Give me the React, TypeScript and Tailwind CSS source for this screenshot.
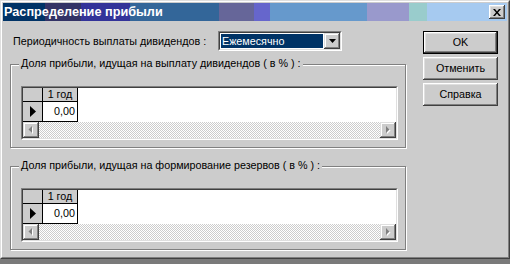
const raised =
  "shadow-[inset_-1px_-1px_0_#404040,inset_1px_1px_0_#ffffff,inset_-2px_-2px_0_#808080,inset_2px_2px_0_#dfdfdf]";
const scrollRaised =
  "shadow-[inset_-1px_-1px_0_#404040,inset_1px_1px_0_#dfdfdf,inset_-2px_-2px_0_#808080,inset_2px_2px_0_#ffffff]";

function ScrollButton({ dir }: { dir: "left" | "right" }) {
  return (
    <div className={`flex h-[16px] w-[16px] items-center justify-center bg-[#cccccc] ${scrollRaised}`}>
      <svg width="6" height="8" viewBox="0 0 6 8">
        {dir === "left" ? (
          <>
            <polygon points="5,1 5,8 1.5,4.5" fill="#ffffff" />
            <polygon points="4,0 4,7 0.5,3.5" fill="#808080" />
          </>
        ) : (
          <>
            <polygon points="2,1 2,8 5.5,4.5" fill="#ffffff" />
            <polygon points="1,0 1,7 4.5,3.5" fill="#808080" />
          </>
        )}
      </svg>
    </div>
  );
}

function Grid() {
  return (
    <div className="w-[377px] border border-t-[#808080] border-l-[#808080] border-r-white border-b-white">
      <div className="flex h-[52px] flex-col border border-t-[#404040] border-l-[#404040] border-r-[#dfdfdf] border-b-[#dfdfdf] bg-white">
        <div className="flex-1">
          <div className="flex h-[14px]">
            <div className="w-[20px] border-r border-b border-black bg-[#cccccc]" />
            <div className="w-[35px] border-r border-b border-black bg-[#cccccc] text-center leading-[13px]">
              1 год
            </div>
          </div>
          <div className="flex h-[20px]">
            <div className="flex w-[20px] items-center justify-center border-r border-b border-black bg-[#cccccc]">
              <svg width="6" height="11" viewBox="0 0 6 11">
                <polygon points="0,0 6,5.5 0,11" fill="#000000" />
              </svg>
            </div>
            <div className="w-[35px] border-r border-b border-black pr-[2px] text-right leading-[19px]">0,00</div>
          </div>
        </div>
        <div className="flex h-[16px]">
          <ScrollButton dir="left" />
          <div className="flex-1 bg-[image:repeating-conic-gradient(#cccccc_0_25%,#ffffff_0_50%)] bg-[length:2px_2px]" />
          <ScrollButton dir="right" />
        </div>
      </div>
    </div>
  );
}

function GroupBox({ title, className }: { title: string; className: string }) {
  return (
    <div
      className={`relative h-[84px] border border-[#808080] pt-[21px] pl-[10px] shadow-[inset_1px_1px_0_#ffffff,1px_1px_0_#ffffff] ${className}`}
    >
      <span className="absolute top-[-8px] left-[8px] bg-[#cccccc] px-[2px] leading-[13px]">{title}</span>
      <Grid />
    </div>
  );
}

function Button({ label, primary, className }: { label: string; primary?: boolean; className?: string }) {
  return (
    <div
      className={`flex h-[23px] w-[75px] items-center justify-center bg-[#cccccc] ${raised} ${
        primary ? "border border-black" : ""
      } ${className ?? ""}`}
    >
      {label}
    </div>
  );
}

export default function App() {
  return (
    <div className="flex h-[264px] w-[510px] flex-col bg-[#cccccc] font-['Liberation_Sans',Arial,sans-serif] text-[10.75px] text-black">
      <div className="flex h-[259px] flex-col border border-t-[#dfdfdf] border-l-[#dfdfdf] border-r-[#404040] border-b-[#404040]">
        <div className="flex flex-1 flex-col border border-t-white border-l-white border-r-[#808080] border-b-[#808080] p-[1px]">
          {/* title bar */}
          <div className="flex h-[18px] items-center bg-[linear-gradient(90deg,#003366_0_42px,#333366_42px_78px,#333399_78px_127px,#336699_127px_216px,#666699_216px_251px,#6666cc_251px_267px,#6699cc_267px_364px,#9999cc_364px_406px,#99cccc_406px_424px,#a6caf0_424px)] pl-[1px]">
            <span className="flex-1 text-[12.7px] leading-[18px] font-bold text-white">Распределение прибыли</span>
            <div className={`mr-[2px] flex h-[14px] w-[16px] items-center justify-center bg-[#cccccc] ${raised}`}>
              <svg width="8" height="7" viewBox="0 0 8 7">
                <path d="M0 0h2l2 2.5L6 0h2L5 3.5 8 7H6L4 4.5 2 7H0l3-3.5z" fill="#000000" />
              </svg>
            </div>
          </div>

          {/* body */}
          <div className="flex pt-[10px]">
            <div className="ml-[7px] w-[396px]">
              <div className="flex h-[20px] items-center">
                <span className="w-[208px] pl-[3px]">Периодичность выплаты дивидендов :</span>
                <div className="flex h-[20px] w-[124px] border border-t-[#808080] border-l-[#808080] border-r-white border-b-white">
                  <div className="flex flex-1 border border-t-[#404040] border-l-[#404040] border-r-[#dfdfdf] border-b-[#dfdfdf] bg-white">
                    <div className="flex-1 p-[1px]">
                      <div className="h-full bg-[#003366] pl-[1px] leading-[14px] text-white">Ежемесячно</div>
                    </div>
                    <div className={`flex h-[16px] w-[16px] items-center justify-center bg-[#cccccc] ${scrollRaised}`}>
                      <svg width="7" height="4" viewBox="0 0 7 4">
                        <polygon points="0,0 7,0 3.5,4" fill="#000000" />
                      </svg>
                    </div>
                  </div>
                </div>
              </div>

              <GroupBox className="mt-[13px]" title="Доля прибыли, идущая на выплату дивидендов ( в % ) :" />
              <GroupBox className="mt-[18px]" title="Доля прибыли, идущая на формирование резервов ( в % ) :" />
            </div>

            <div className="ml-[17px] flex w-[75px] flex-col gap-[3px]">
              <Button label="OK" primary />
              <Button label="Отменить" />
              <Button label="Справка" />
            </div>
          </div>
        </div>
      </div>
      <div className="h-[5px] bg-[#7a7a7a]" />
    </div>
  );
}
